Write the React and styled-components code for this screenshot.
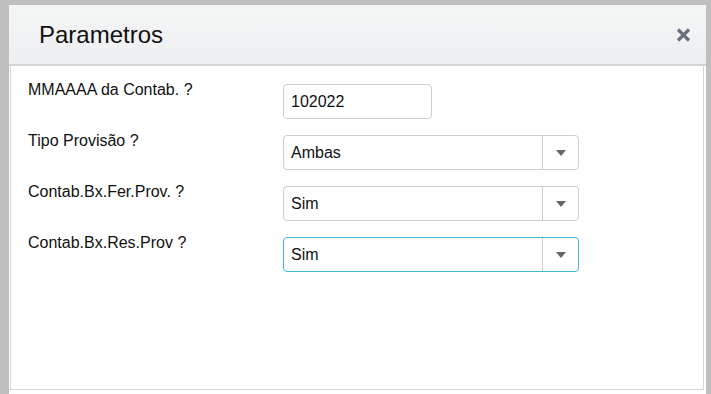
import styled, { createGlobalStyle } from "styled-components";

const GlobalStyle = createGlobalStyle`
html, body {
  margin: 0;
  padding: 0;
  background: #bfbfbf;
  font-family: "Liberation Sans", Arial, sans-serif;
}
`

const Page = styled.div`
width: 711px;
height: 394px;
padding: 5px 5px 0 9px;
box-sizing: border-box;
overflow: hidden;
`

const Dialog = styled.div`
background: #fff;
height: 400px;
display: flex;
flex-direction: column;
`

const Header = styled.div`
height: 59px;
flex-shrink: 0;
display: flex;
align-items: center;
justify-content: space-between;
padding: 0 15px 0 30px;
background: linear-gradient(#f4f5f5, #eeeff1);
border-bottom: 2px solid #d3d4d5;
`

const Title = styled.h1`
margin: 0;
font-size: 24px;
font-weight: normal;
color: #111;
`

const CloseBtn = styled.button`
border: 0;
padding: 0;
background: none;
width: 16px;
height: 14px;
display: flex;
align-items: center;
justify-content: center;
cursor: pointer;
`

const Panel = styled.div`
height: 324px;
flex-shrink: 0;
box-sizing: border-box;
margin: 0 2px 0 1px;
border: 1px solid #d6d6d6;
border-top: 0;
padding: 15px 0 0 17px;
display: flex;
flex-direction: column;
gap: 13px;
`

const Row = styled.div`
display: grid;
grid-template-columns: 255px auto;
align-items: start;
`

const Label = styled.label`
font-size: 16px;
color: #111;
line-height: 18px;
`

const Field = styled.div`
margin-top: 3px;
height: 35px;
width: ${p => p.$w}px;
box-sizing: border-box;
border: 1px solid ${p => (p.$focus ? "#41b6d8" : "#cfcfcf")};
border-radius: 4px;
display: flex;
align-items: center;
background: #fff;
`

const Value = styled.span`
flex: 1;
padding-left: 7px;
font-size: 16px;
color: #111;
`

const Arrow = styled.span`
width: 35px;
align-self: stretch;
border-left: 1px solid #cfcfcf;
display: flex;
align-items: center;
justify-content: center;
`

const Caret = () => (
    <svg width="10" height="6" viewBox="0 0 10 6">
        <path d="M0 0 H10 L5 6 Z" fill="#62676e" />
    </svg>
)

const params = [
    { label: "MMAAAA da Contab. ?", value: "102022", select: false },
    { label: "Tipo Provisão ?", value: "Ambas", select: true },
    { label: "Contab.Bx.Fer.Prov. ?", value: "Sim", select: true },
    { label: "Contab.Bx.Res.Prov ?", value: "Sim", select: true, focus: true },
]

const App = () => {
    return (
        <Page>
            <GlobalStyle />
            <Dialog>
                <Header>
                    <Title>Parametros</Title>
                    <CloseBtn aria-label="Fechar">
                        <svg width="15" height="14" viewBox="0 0 15 14">
                            <path d="M2 1.5 L13 12.5 M13 1.5 L2 12.5" stroke="#6b717a" strokeWidth="3.2" />
                        </svg>
                    </CloseBtn>
                </Header>
                <Panel>
                    {
                        params.map((it, idx) => {
                            return (
                                <Row key={idx}>
                                    <Label>{it.label}</Label>
                                    <Field $w={it.select ? 296 : 149} $focus={it.focus}>
                                        <Value>{it.value}</Value>
                                        {it.select && <Arrow><Caret /></Arrow>}
                                    </Field>
                                </Row>
                            )
                        })
                    }
                </Panel>
            </Dialog>
        </Page>
    )
}

export default App;
